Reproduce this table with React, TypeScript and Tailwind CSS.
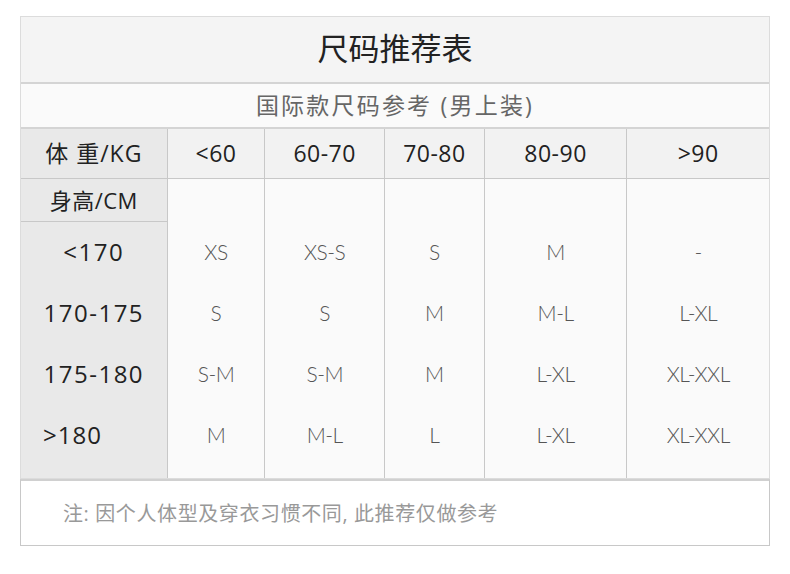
import React from "react";

const cols = ["<60", "60-70", "70-80", "80-90", ">90"];
const widths = ["w-[98px]", "w-[120px]", "w-[100px]", "w-[143px]", "w-[143px]"];
const data = [
  ["XS", "S", "S-M", "M"],
  ["XS-S", "S", "S-M", "M-L"],
  ["S", "M", "M", "L"],
  ["M", "M-L", "L-XL", "L-XL"],
  ["-", "L-XL", "XL-XXL", "XL-XXL"],
];
const heights = ["<170", "170-175", "175-180", ">180"];

export default function App() {
  return (
    <div
      className="w-[790px] h-[574px] bg-white pt-4 px-5"
      style={{ fontFamily: '"Open Sans", "Noto Sans CJK SC", sans-serif' }}
    >
      <div className="w-[750px] border border-[#dcdcdc]">
        <div className="h-[67px] bg-[#f4f4f4] border-b-2 border-[#d4d4d4] flex items-center justify-center text-[31px] text-[#222] pb-[2px]">
          尺码推荐表
        </div>
        <div className="h-[45px] bg-[#fafafa] border-b-2 border-[#d4d4d4] flex items-center justify-center text-[23px] text-[#666] tracking-[2.2px]">
          国际款尺码参考 (男上装)
        </div>
        <div className="flex">
          <div className="w-[146px] bg-[#e9e9e9] flex flex-col text-[#222]">
            <div className="h-[50px] border-b border-[#c8c8c8] flex items-center justify-center text-[23px] tracking-[1px]">
              体 重/KG
            </div>
            <div className="h-[43px] border-b border-[#c8c8c8] flex items-center justify-center text-[22px] tracking-[0.5px]">
              身高/CM
            </div>
            {heights.map((h, i) => (
              <div
                key={h}
                className={
                  i === 3
                    ? "h-[61px] flex items-center pl-[22px] pb-[2px] text-[24px] tracking-[1px]"
                    : "h-[61px] flex items-center justify-center pb-[2px] text-[24px] tracking-[1.5px]"
                }
              >
                {h}
              </div>
            ))}
            <div className="h-[12px]" />
          </div>
          {cols.map((c, ci) => (
            <div key={c} className={`${widths[ci]} flex flex-col border-l border-[#c8c8c8]`}>
              <div className="h-[50px] bg-[#f2f2f2] border-b border-[#c8c8c8] flex items-center justify-center text-[23px] tracking-[0.5px] text-[#222]">
                {c}
              </div>
              <div className="bg-[#fafafa] flex flex-col">
                <div className="h-[43px]" />
                {data[ci].map((d, ri) => (
                  <div
                    key={ri}
                    className="h-[61px] flex items-center justify-center pb-[2px] text-[21px] text-[#555] font-light tracking-[-0.5px]"
                    style={{ fontFamily: '"Lato", sans-serif' }}
                  >
                    {d}
                  </div>
                ))}
                <div className="h-[12px]" />
              </div>
            </div>
          ))}
        </div>
      </div>
      <div className="w-[750px] h-[67px] border border-t-2 border-[#c8c8c8] border-t-[#d0d0d0] flex items-center pl-[42px] text-[20px] tracking-[0.6px] text-[#999] pt-[2px]">
        注: 因个人体型及穿衣习惯不同, 此推荐仅做参考
      </div>
    </div>
  );
}
